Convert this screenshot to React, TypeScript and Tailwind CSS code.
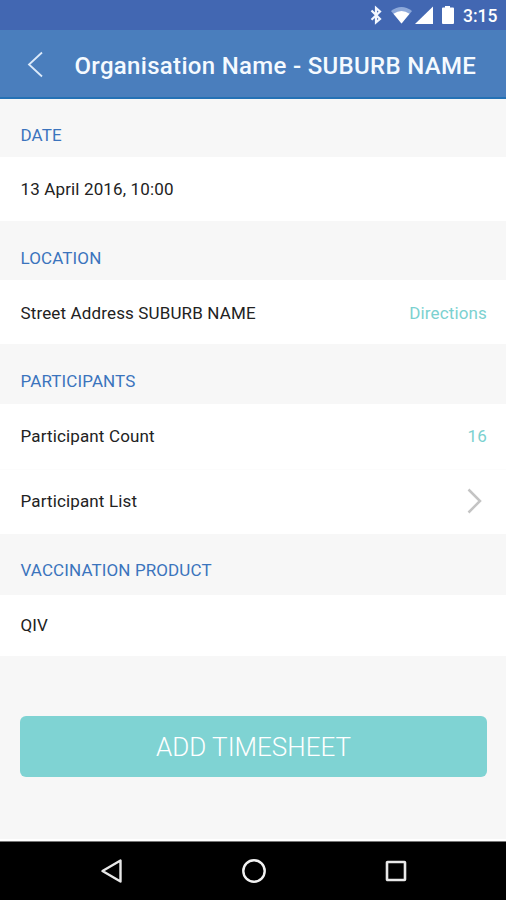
import type { ReactNode } from "react";

function SectionHeading({ className, children }: { className: string; children: ReactNode }) {
  return (
    <h2 className={`flex shrink-0 items-center px-[20.5px] text-[17px] leading-5 font-normal tracking-[0.11px] text-[#3b74bd] ${className}`}>
      {children}
    </h2>
  );
}

function Row({ className, children }: { className: string; children: ReactNode }) {
  return (
    <div className={`flex shrink-0 items-center justify-between bg-white pl-[20.5px] text-[17px] leading-5 tracking-[0.14px] text-[#222] ${className}`}>
      {children}
    </div>
  );
}

function StatusBar() {
  return (
    <div className="flex h-[30px] shrink-0 items-center bg-[#4267b2] pr-[9px] text-white">
      <svg className="ml-auto h-[30px] w-[90px]" viewBox="0 0 90 30" fill="none">
        <path d="M5.500 10.500L14 19L10 22.300V8L14 11.500L5.500 19.800" stroke="#f4f8ff" strokeWidth="2.200" />
        <path d="M25 11Q35.500 3 46 11L35.500 23.500Z" fill="#8ea9da" />
        <path d="M27.500 13.700Q35.500 8.500 43.500 13.700L35.500 23.500Z" fill="#fff" />
        <path d="M49 24L67 6.500V24Z" fill="#fff" />
        <path d="M76 7.500H79V6H84V7.500H87Q88 7.500 88 8.500V23Q88 24 87 24H77Q76 24 76 23V8.500Q76 7.500 77 7.500Z" fill="#fff" />
      </svg>
      <span className="ml-[7px] w-[34px] pt-0.5 text-[17.5px] leading-5 font-medium whitespace-nowrap">3:15</span>
    </div>
  );
}

export default function App() {
  return (
    <div className="flex h-[900px] w-[506px] flex-col overflow-hidden bg-[#f7f7f7] font-['Roboto',sans-serif]">
      <StatusBar />
      <header className="flex h-[69px] shrink-0 items-center border-b-2 border-[#2471b5] bg-[#4a7ebd]">
        <svg className="ml-[26px] h-7 w-5" viewBox="0 0 20 28" fill="none">
          <path d="M16 2.500L3 14.500L16 26.500" stroke="#dceafa" strokeWidth="1.800" />
        </svg>
        <h1 className="ml-[28.5px] pt-1 text-[24px] leading-7 font-medium tracking-[0.31px] whitespace-nowrap text-[#f5faff]">
          Organisation Name - SUBURB NAME
        </h1>
      </header>

      <main className="flex min-h-0 flex-1 flex-col border-b-2 border-white">
        <SectionHeading className="h-[58px] pt-[14px]">DATE</SectionHeading>
        <Row className="h-[64px] pr-[19px]">13 April 2016, 10:00</Row>

        <SectionHeading className="h-[59px] pt-[15px]">LOCATION</SectionHeading>
        <Row className="h-[64px] pt-[2px] pr-[19px]">
          <span>Street Address SUBURB NAME</span>
          <a className="text-[#7bd1d0]">Directions</a>
        </Row>

        <SectionHeading className="h-[60px] pt-[14px]">PARTICIPANTS</SectionHeading>
        <Row className="h-[65px] pr-[19px] pb-px">
          <span>Participant Count</span>
          <span className="text-[#7bd1d0]">16</span>
        </Row>
        <Row className="h-[65px] border-t border-[#fcfcfc] pr-[23px] pb-[2px]">
          <span>Participant List</span>
          <svg className="h-7 w-4" viewBox="0 0 16 28" fill="none">
            <path d="M1.500 2.500L13 14L1.500 25.500" stroke="#c4c4c4" strokeWidth="2.500" />
          </svg>
        </Row>

        <SectionHeading className="h-[61px] pt-[11px]">VACCINATION PRODUCT</SectionHeading>
        <Row className="h-[61px] pr-[19px] pb-px">QIV</Row>

        <button className="mt-[60px] mr-[19px] ml-5 flex h-[61px] shrink-0 items-center justify-center rounded-[6px] bg-[#7fd3d3] pt-px text-[26px] leading-8 font-light text-white">
          ADD TIMESHEET
        </button>
      </main>

      <nav className="flex h-[59px] shrink-0 items-center border-t border-[#777] bg-black">
        <svg className="ml-[100px] h-7 w-6" viewBox="0 0 24 28" fill="none">
          <path d="M20.500 3.500V24.500L2.500 14Z" stroke="#e8e8e8" strokeWidth="2.400" strokeLinejoin="round" />
        </svg>
        <svg className="ml-[116px] h-7 w-7" viewBox="0 0 28 28" fill="none">
          <circle cx="14" cy="14" r="10.700" stroke="#f2f2f2" strokeWidth="2.400" />
        </svg>
        <svg className="ml-[114px] h-7 w-7" viewBox="0 0 28 28" fill="none">
          <rect x="5" y="5" width="18" height="18" rx="0.500" stroke="#e8e8e8" strokeWidth="2.600" />
        </svg>
      </nav>
    </div>
  );
}
